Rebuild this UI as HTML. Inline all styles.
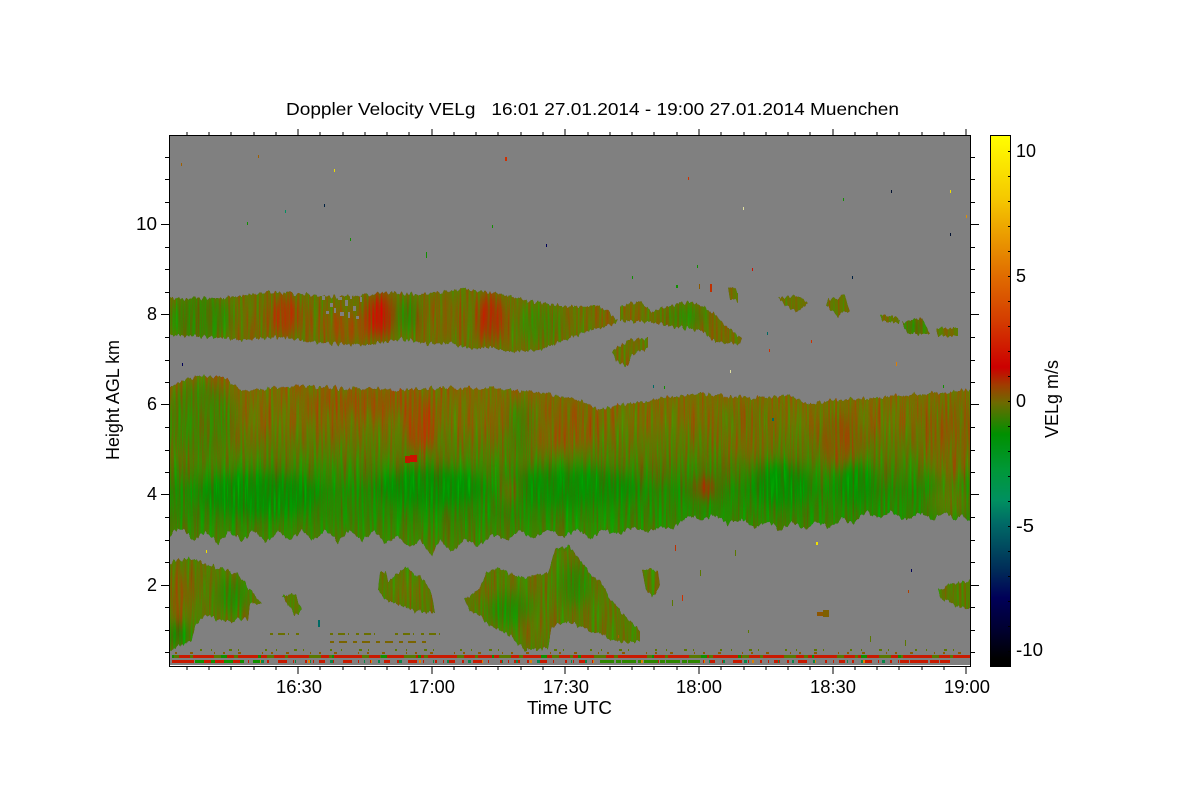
<!DOCTYPE html>
<html><head><meta charset="utf-8"><title>Doppler Velocity</title>
<style>html,body{margin:0;padding:0;background:#fff}svg{display:block}text{font-family:"Liberation Sans",sans-serif;fill:#000;white-space:pre}</style></head>
<body>
<svg width="1200" height="800" viewBox="0 0 1200 800" xmlns="http://www.w3.org/2000/svg">
<defs>
<linearGradient id="cb" x1="0" y1="135" x2="0" y2="667" gradientUnits="userSpaceOnUse">
<stop offset="0" stop-color="#ffff00"/><stop offset=".12" stop-color="#f5c800"/><stop offset=".265" stop-color="#e06c00"/><stop offset=".35" stop-color="#d43c00"/><stop offset=".437" stop-color="#cc0000"/><stop offset=".47" stop-color="#a03c00"/><stop offset=".503" stop-color="#6e6a00"/><stop offset=".562" stop-color="#009000"/><stop offset=".63" stop-color="#009838"/><stop offset=".687" stop-color="#009060"/><stop offset=".73" stop-color="#006a66"/><stop offset=".82" stop-color="#002a58"/><stop offset=".87" stop-color="#000058"/><stop offset=".93" stop-color="#000030"/><stop offset=".985" stop-color="#000000"/>
</linearGradient>
<linearGradient id="mv" x1="0" y1="380" x2="0" y2="550" gradientUnits="userSpaceOnUse">
<stop offset="0" stop-color="#7e6a00"/><stop offset=".25" stop-color="#747000"/><stop offset=".45" stop-color="#567a00"/><stop offset=".65" stop-color="#258800"/><stop offset=".8" stop-color="#2e8600"/><stop offset="1" stop-color="#4c8000"/>
</linearGradient>
<clipPath id="plot"><rect x="170" y="136" width="800" height="529"/></clipPath>
<clipPath id="shapes">
<polygon points="170,299 220,298 250,295 270,292 300,294 340,297 390,292 420,295 460,289 490,292 520,299 560,306 600,306 612,314 618,322 600,328 585,332 560,342 540,350 510,352 490,347 470,349 450,343 430,344 400,339 370,345 340,344 310,342 280,337 240,340 210,337 170,335"/>
<polygon points="620,306 640,302 650,310 650,322 632,322 620,320"/>
<polygon points="650,312 675,304 695,302 712,312 728,328 742,338 740,344 716,342 700,330 675,327 650,322"/>
<polygon points="612,352 628,340 648,338 648,348 632,354 628,366 616,362"/>
<polygon points="728,288 738,290 738,300 730,301"/>
<polygon points="778,298 800,296 808,304 796,312 786,306"/>
<polygon points="828,300 845,296 850,310 838,316 826,306"/>
<polygon points="880,316 898,316 900,322 882,322"/>
<polygon points="902,322 922,318 930,334 908,334"/>
<polygon points="936,328 958,328 958,336 938,336"/>
<polygon points="170,385 185,380 200,375 225,378 240,390 300,386 340,388 400,390 440,388 500,388 550,394 580,400 597,410 620,405 650,400 700,394 760,398 790,395 810,405 830,400 900,396 970,390 970,522 962,514 955,520 945,512 932,520 920,513 905,520 892,512 878,518 866,512 852,524 842,518 830,528 818,522 806,529 792,522 780,530 768,522 755,528 742,519 728,524 715,515 702,520 690,516 676,524 672,530 660,526 648,533 632,527 618,535 604,530 590,538 576,530 562,537 548,529 534,538 520,531 506,541 492,534 478,548 466,538 452,552 440,540 432,556 420,540 408,548 398,536 386,544 374,530 362,541 350,530 338,543 326,530 314,540 302,530 290,541 278,531 266,543 254,530 242,541 230,531 218,544 206,532 194,541 182,528 170,534"/>
<polygon points="170,562 190,558 210,566 235,572 245,582 252,592 262,604 250,604 248,618 225,622 205,615 195,626 192,640 180,646 172,650 170,650"/>
<polygon points="380,572 386,572 388,582 405,568 425,580 432,595 435,613 410,610 385,600 378,590"/>
<polygon points="464,598 480,590 486,572 496,568 520,578 548,572 556,548 570,546 580,562 600,582 615,606 630,620 640,632 640,642 616,642 590,630 565,622 552,628 548,648 525,650 510,636 490,625 470,610"/>
<polygon points="642,570 658,570 660,586 652,598 646,590"/>
<polygon points="938,590 955,582 970,580 970,608 955,605 940,597"/>
<polygon points="282,596 296,594 302,612 294,614"/>
</clipPath>
<filter id="blur" x="-10%" y="-10%" width="120%" height="120%" color-interpolation-filters="sRGB"><feGaussianBlur stdDeviation="7"/></filter>
<filter id="tex" x="170" y="136" width="800" height="529" filterUnits="userSpaceOnUse" color-interpolation-filters="sRGB">
<feTurbulence type="fractalNoise" baseFrequency="0.3 0.006" numOctaves="2" seed="4" result="n"/>
<feColorMatrix in="n" type="matrix" values="0 0 0 0 .5  1 0 0 0 0  0 0 0 0 0  0 0 0 0 1" result="d"/>
<feDisplacementMap in="SourceGraphic" in2="d" scale="9" xChannelSelector="R" yChannelSelector="G" result="j"/>
<feTurbulence type="fractalNoise" baseFrequency="0.42 0.02" numOctaves="2" seed="9" result="m"/>
<feColorMatrix in="m" type="matrix" values="2 0 0 0 -.5  -1.6 0 0 0 1.3  0 0 0 0 0  0 0 0 0 1" result="c"/>
<feComposite in="j" in2="c" operator="arithmetic" k1="0" k2="1" k3=".28" k4="-.14" result="a"/>
<feComposite in="a" in2="j" operator="in"/>
</filter>
</defs>

<rect width="1200" height="800" fill="#fff"/>
<rect x="170" y="136" width="800" height="530" fill="#fff"/>
<rect x="170" y="136" width="800" height="529" fill="#808080"/>

<g clip-path="url(#plot)">
<g filter="url(#tex)">
<g clip-path="url(#shapes)">
<rect x="170" y="280" width="800" height="90" fill="#6a7200"/>
<rect x="170" y="370" width="800" height="190" fill="url(#mv)"/>
<rect x="170" y="550" width="800" height="110" fill="#5a7a00"/>
<g filter="url(#blur)">
<ellipse cx="200" cy="318" rx="32" ry="25" fill="#3f7e00"/>
<ellipse cx="250" cy="325" rx="20" ry="15" fill="#6e6e00"/>
<ellipse cx="345" cy="326" rx="30" ry="16" fill="#8c5a00"/>
<ellipse cx="285" cy="316" rx="15" ry="20" fill="#a83c00"/>
<ellipse cx="380" cy="316" rx="12" ry="22" fill="#c41400"/>
<ellipse cx="408" cy="315" rx="8" ry="18" fill="#2f8000"/>
<ellipse cx="440" cy="320" rx="20" ry="22" fill="#7e6200"/>
<ellipse cx="490" cy="318" rx="11" ry="24" fill="#b82400"/>
<ellipse cx="540" cy="325" rx="22" ry="20" fill="#4f7c00"/>
<ellipse cx="595" cy="318" rx="14" ry="10" fill="#786800"/>
<ellipse cx="632" cy="312" rx="10" ry="9" fill="#806600"/>
<ellipse cx="685" cy="316" rx="22" ry="10" fill="#3f8000"/>
<ellipse cx="725" cy="335" rx="14" ry="7" fill="#7a6600"/>
<ellipse cx="915" cy="327" rx="12" ry="7" fill="#208a00"/>
<ellipse cx="200" cy="420" rx="35" ry="40" fill="#4a7c00"/>
<ellipse cx="370" cy="402" rx="65" ry="12" fill="#8c5a00"/>
<ellipse cx="422" cy="428" rx="13" ry="24" fill="#a84400"/>
<ellipse cx="560" cy="425" rx="45" ry="26" fill="#806400"/>
<ellipse cx="840" cy="440" rx="20" ry="28" fill="#845a00"/>
<ellipse cx="745" cy="430" rx="30" ry="25" fill="#786800"/>
<ellipse cx="950" cy="440" rx="30" ry="40" fill="#786800"/>
<ellipse cx="520" cy="430" rx="10" ry="30" fill="#3f8000"/>
<ellipse cx="260" cy="495" rx="60" ry="20" fill="#0a8e00"/>
<ellipse cx="430" cy="488" rx="55" ry="18" fill="#0a8e00"/>
<ellipse cx="570" cy="488" rx="70" ry="18" fill="#108c00"/>
<ellipse cx="780" cy="485" rx="30" ry="20" fill="#0a8e00"/>
<ellipse cx="855" cy="485" rx="20" ry="20" fill="#108c00"/>
<ellipse cx="705" cy="488" rx="9" ry="10" fill="#c42000"/>
<ellipse cx="510" cy="490" rx="8" ry="14" fill="#7a6600"/>
<ellipse cx="950" cy="500" rx="20" ry="20" fill="#5a7a00"/>
<ellipse cx="178" cy="600" rx="12" ry="35" fill="#845e00"/>
<ellipse cx="178" cy="635" rx="10" ry="12" fill="#0a8c00"/>
<ellipse cx="232" cy="595" rx="14" ry="18" fill="#2a8800"/>
<ellipse cx="510" cy="610" rx="22" ry="16" fill="#2a8800"/>
<ellipse cx="535" cy="625" rx="14" ry="16" fill="#6a7000"/>
<ellipse cx="575" cy="585" rx="14" ry="22" fill="#2e8600"/>
<ellipse cx="480" cy="590" rx="10" ry="6" fill="#845e00"/>
<ellipse cx="410" cy="590" rx="18" ry="12" fill="#6a7200"/>
</g>
</g>
</g>

<rect x="405" y="456" width="5" height="7" fill="#c01800"/><rect x="410" y="455" width="7" height="7" fill="#cc1000"/>
<g fill="#808080">
<rect x="345" y="300" width="3" height="6"/><rect x="353" y="306" width="3" height="5"/><rect x="330" y="303" width="3" height="4"/><rect x="338" y="297" width="4" height="3"/><rect x="322" y="296" width="3" height="4"/><rect x="350" y="295" width="2" height="4"/><rect x="340" y="312" width="4" height="4"/><rect x="360" y="297" width="2" height="5"/><rect x="334" y="308" width="2" height="5"/><rect x="348" y="312" width="2" height="6"/><rect x="356" y="316" width="3" height="3"/><rect x="326" y="311" width="3" height="3"/>
</g>

<!-- sparse rows -->
<g stroke-width="3" fill="none" shape-rendering="crispEdges">
<path d="M270 634H300M330 634H380M395 634H440" stroke="#6a7000" stroke-width="2" stroke-dasharray="3 5 7 3 1 7"/>
<path d="M330 642H430" stroke="#7a6400" stroke-width="2" stroke-dasharray="4 5 8 6"/>
<path d="M200 650H970" stroke="#5a7800" stroke-width="2" stroke-dasharray="2 9 1 17 3 6 1 26"/>
<path d="M175 653H970" stroke="#8a5a00" stroke-width="2" stroke-dasharray="2 13 3 21 1 8"/>
<path d="M172 656.500H970" stroke="#c81a00" stroke-width="3"/>
<path d="M172 656.500H970" stroke="#5a7800" stroke-width="3" stroke-dasharray="7 11 3 21 12 8 4 29"/>
<path d="M172 656.500H970" stroke="#109000" stroke-width="3" stroke-dasharray="2 47 6 31 3 71"/>
<path d="M172 661.500H240" stroke="#c81a00" stroke-dasharray="22 1 30 2"/>
<path d="M240 661.500H900" stroke="#c81a00" stroke-dasharray="2 6 1 5 6 7 2 9 9 6 1 11"/>
<path d="M240 661.500H900" stroke="#08884a" stroke-dasharray="2 19 3 31 1 13"/>
<path d="M195 661.500H260" stroke="#109000" stroke-dasharray="9 7 4 9"/>
<path d="M900 661.500H950" stroke="#c81a00" stroke-dasharray="9 1 18 2"/>
<path d="M600 661.500H700" stroke="#2e8600" stroke-dasharray="14 2 5 1"/>
<path d="M260 661.500H890" stroke="#e08000" stroke-dasharray="1 47 2 61"/>
</g>

<!-- speckles -->
<g shape-rendering="crispEdges">
<rect x="181" y="163" width="1" height="3" fill="#a06000"/><rect x="258" y="155" width="1" height="3" fill="#a06000"/><rect x="334" y="169" width="1" height="3" fill="#f0e000"/><rect x="505" y="157" width="2" height="4" fill="#d03000"/><rect x="688" y="177" width="1" height="3" fill="#d03000"/><rect x="324" y="204" width="1" height="3" fill="#002040"/><rect x="285" y="210" width="1" height="3" fill="#009060"/><rect x="247" y="222" width="1" height="3" fill="#109000"/><rect x="350" y="238" width="1" height="3" fill="#109000"/><rect x="426" y="252" width="1" height="6" fill="#109000"/><rect x="492" y="225" width="1" height="3" fill="#109000"/><rect x="546" y="244" width="1" height="3" fill="#000058"/><rect x="743" y="207" width="1" height="3" fill="#e0e0a0"/><rect x="752" y="268" width="1" height="3" fill="#d01000"/><rect x="843" y="198" width="1" height="3" fill="#109000"/><rect x="891" y="190" width="1" height="3" fill="#001030"/><rect x="950" y="190" width="1" height="3" fill="#f0e000"/><rect x="966" y="215" width="1" height="3" fill="#e09000"/><rect x="950" y="233" width="1" height="3" fill="#001030"/><rect x="852" y="276" width="1" height="3" fill="#002040"/><rect x="632" y="276" width="1" height="3" fill="#109000"/><rect x="697" y="265" width="1" height="3" fill="#109000"/>
<rect x="699" y="284" width="1" height="5" fill="#8a5a00"/><rect x="710" y="284" width="2" height="8" fill="#c03000"/><rect x="676" y="285" width="2" height="3" fill="#109000"/><rect x="182" y="363" width="1" height="3" fill="#000058"/><rect x="767" y="332" width="1" height="3" fill="#006a66"/><rect x="769" y="349" width="1" height="3" fill="#d03000"/><rect x="811" y="340" width="1" height="3" fill="#d03000"/><rect x="896" y="362" width="1" height="4" fill="#e08000"/><rect x="730" y="370" width="1" height="3" fill="#e0e0a0"/><rect x="772" y="418" width="2" height="3" fill="#006a66"/><rect x="664" y="386" width="1" height="3" fill="#109000"/><rect x="653" y="385" width="1" height="3" fill="#006a66"/><rect x="943" y="385" width="1" height="3" fill="#109000"/>
<rect x="206" y="550" width="1" height="3" fill="#f0e000"/><rect x="816" y="542" width="2" height="3" fill="#f0e000"/><rect x="911" y="569" width="1" height="3" fill="#000058"/><rect x="817" y="612" width="6" height="4" fill="#8e5600"/><rect x="823" y="610" width="6" height="7" fill="#7e6000"/><rect x="318" y="620" width="2" height="7" fill="#006a66"/><rect x="675" y="545" width="1" height="6" fill="#c03000"/><rect x="908" y="590" width="1" height="3" fill="#b04000"/><rect x="735" y="550" width="1" height="6" fill="#5a7800"/><rect x="700" y="570" width="1" height="6" fill="#5a7800"/><rect x="682" y="595" width="1" height="6" fill="#d03000"/><rect x="672" y="600" width="1" height="6" fill="#5a7800"/><rect x="618" y="635" width="1" height="3" fill="#a06000"/><rect x="748" y="630" width="1" height="3" fill="#5a7800"/><rect x="870" y="636" width="1" height="6" fill="#5a7800"/><rect x="905" y="640" width="1" height="6" fill="#5a7800"/>
</g>
</g>

<!-- axes -->
<g fill="none" stroke="#000" stroke-width="1" shape-rendering="crispEdges">
<rect x="169.500" y="135.500" width="801" height="531"/>
<path d="M187 667v3M209 667v3M231 667v3M254 667v3M276 667v3M298 667v7M320 667v3M343 667v3M365 667v3M387 667v3M409 667v3M432 667v7M454 667v3M476 667v3M498 667v3M521 667v3M543 667v3M565 667v7M588 667v3M610 667v3M632 667v3M654 667v3M677 667v3M699 667v7M721 667v3M744 667v3M766 667v3M788 667v3M810 667v3M833 667v7M855 667v3M877 667v3M899 667v3M922 667v3M944 667v3M966 667v7"/>
<path d="M187 135v-3M209 135v-3M231 135v-3M254 135v-3M276 135v-3M298 135v-6M320 135v-3M343 135v-3M365 135v-3M387 135v-3M409 135v-3M432 135v-6M454 135v-3M476 135v-3M498 135v-3M521 135v-3M543 135v-3M565 135v-6M588 135v-3M610 135v-3M632 135v-3M654 135v-3M677 135v-3M699 135v-6M721 135v-3M744 135v-3M766 135v-3M788 135v-3M810 135v-3M833 135v-6M855 135v-3M877 135v-3M899 135v-3M922 135v-3M944 135v-3M966 135v-6"/>
<path d="M169 157.500h-4M169 179.500h-4M169 202.500h-4M169 224.500h-8M169 247.500h-4M169 269.500h-4M169 292.500h-4M169 314.500h-8M169 337.500h-4M169 360.500h-4M169 382.500h-4M169 404.500h-8M169 427.500h-4M169 450.500h-4M169 472.500h-4M169 494.500h-8M169 517.500h-4M169 540.500h-4M169 562.500h-4M169 585.500h-8M169 607.500h-4M169 630.500h-4M169 652.500h-4"/>
<path d="M970 157.500h5M970 179.500h5M970 202.500h5M970 224.500h9M970 247.500h5M970 269.500h5M970 292.500h5M970 314.500h9M970 337.500h5M970 360.500h5M970 382.500h5M970 404.500h9M970 427.500h5M970 450.500h5M970 472.500h5M970 494.500h9M970 517.500h5M970 540.500h5M970 562.500h5M970 585.500h9M970 607.500h5M970 630.500h5M970 652.500h5"/>
</g>

<!-- colour bar -->
<rect x="990.500" y="135.500" width="20" height="531" fill="url(#cb)" stroke="#000" stroke-width="1" shape-rendering="crispEdges"/>
<path d="M1010 151.500h-2M1010 176.500h-2M1010 201.500h-2M1010 226.500h-2M1010 251.500h-2M1010 276.500h-2M1010 301.500h-2M1010 326.500h-2M1010 351.500h-2M1010 376.500h-2M1010 401.500h-2M1010 426.500h-2M1010 451.500h-2M1010 476.500h-2M1010 501.500h-2M1010 526.500h-2M1010 551.500h-2M1010 576.500h-2M1010 601.500h-2M1010 626.500h-2M1010 651.500h-2" stroke="#000" stroke-width="1" fill="none" shape-rendering="crispEdges"/>

<!-- text -->
<text x="286" y="115" font-size="17.500" textLength="613" lengthAdjust="spacingAndGlyphs" xml:space="preserve">Doppler Velocity VELg   16:01 27.01.2014 - 19:00 27.01.2014 Muenchen</text>
<g font-size="18">
<text x="136" y="230" textLength="21" lengthAdjust="spacingAndGlyphs">10</text>
<text x="147" y="320" textLength="10" lengthAdjust="spacingAndGlyphs">8</text>
<text x="147" y="410" textLength="10" lengthAdjust="spacingAndGlyphs">6</text>
<text x="147" y="500" textLength="10" lengthAdjust="spacingAndGlyphs">4</text>
<text x="147" y="591" textLength="10" lengthAdjust="spacingAndGlyphs">2</text>
<text x="276" y="693" textLength="46" lengthAdjust="spacingAndGlyphs">16:30</text>
<text x="409" y="693" textLength="46" lengthAdjust="spacingAndGlyphs">17:00</text>
<text x="543" y="693" textLength="46" lengthAdjust="spacingAndGlyphs">17:30</text>
<text x="676" y="693" textLength="46" lengthAdjust="spacingAndGlyphs">18:00</text>
<text x="810" y="693" textLength="46" lengthAdjust="spacingAndGlyphs">18:30</text>
<text x="944" y="693" textLength="46" lengthAdjust="spacingAndGlyphs">19:00</text>
<text x="527" y="714" textLength="85" lengthAdjust="spacingAndGlyphs">Time UTC</text>
<text x="1016" y="157" textLength="20" lengthAdjust="spacingAndGlyphs">10</text>
<text x="1016" y="282" textLength="10" lengthAdjust="spacingAndGlyphs">5</text>
<text x="1016" y="407" textLength="10" lengthAdjust="spacingAndGlyphs">0</text>
<text x="1016" y="532" textLength="18" lengthAdjust="spacingAndGlyphs">-5</text>
<text x="1016" y="656" textLength="27" lengthAdjust="spacingAndGlyphs">-10</text>
<text transform="translate(119,460) rotate(-90)" textLength="120" lengthAdjust="spacingAndGlyphs">Height AGL km</text>
<text transform="translate(1058,438) rotate(-90)" textLength="78" lengthAdjust="spacingAndGlyphs">VELg m/s</text>
</g>
</svg>
</body></html>
